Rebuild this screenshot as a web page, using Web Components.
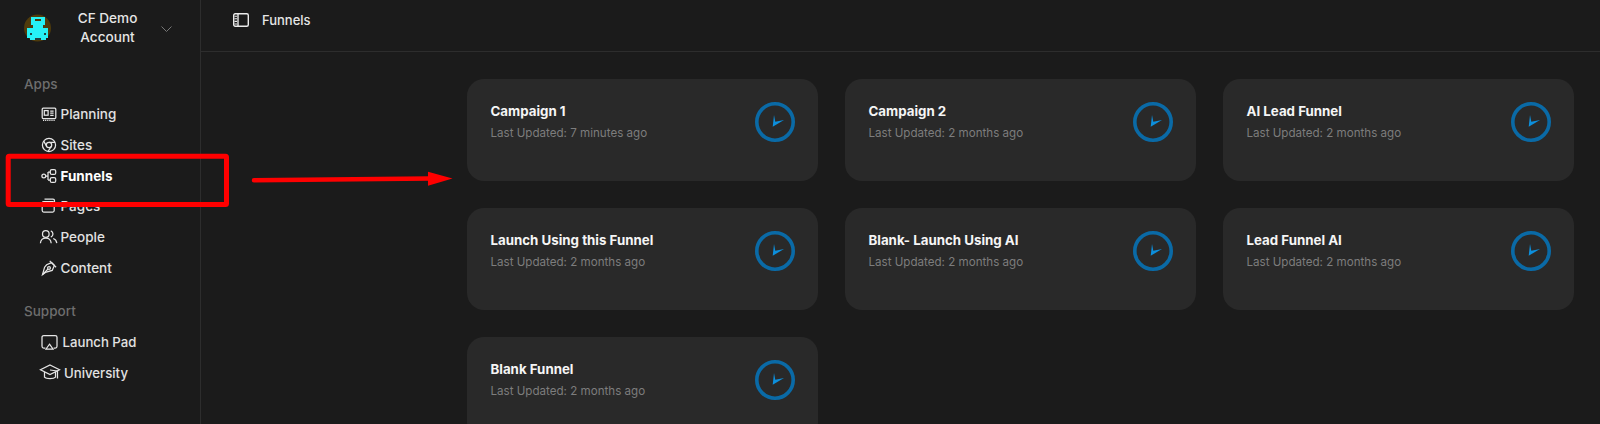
<!DOCTYPE html>
<html><head><meta charset="utf-8"><style>
html,body{margin:0;height:424px;overflow:hidden;background:#1b1b1b;font-family:Inter,"Liberation Sans",sans-serif}
</style></head><body>
<app-shell>
<side-bar slot="side">
  <account-head></account-head>
  <nav-group label="Apps">
    <nav-item icon="planning">Planning</nav-item>
    <nav-item icon="sites">Sites</nav-item>
    <nav-item icon="funnels" active>Funnels</nav-item>
    <nav-item icon="pages">Pages</nav-item>
    <nav-item icon="people">People</nav-item>
    <nav-item icon="content">Content</nav-item>
  </nav-group>
  <nav-group label="Support" class="support">
    <nav-item icon="launch" w="17" gap="5">Launch Pad</nav-item>
    <nav-item icon="uni" w="22" gap="3">University</nav-item>
  </nav-group>
</side-bar>
<top-bar slot="top">Funnels</top-bar>
<funnel-card name="Campaign 1" time="7 minutes ago"></funnel-card>
<funnel-card name="Campaign 2" time="2 months ago"></funnel-card>
<funnel-card name="AI Lead Funnel" time="2 months ago"></funnel-card>
<funnel-card name="Launch Using this Funnel" time="2 months ago"></funnel-card>
<funnel-card name="Blank- Launch Using AI" time="2 months ago"></funnel-card>
<funnel-card name="Lead Funnel AI" time="2 months ago"></funnel-card>
<funnel-card name="Blank Funnel" time="2 months ago"></funnel-card>
<red-annotation slot="over"></red-annotation>
</app-shell>
<script>
const ICONS={
planning:'<rect x="1.2" y="2.2" width="13.6" height="10.3" rx="1"/><rect x="3.3" y="4.6" width="3.8" height="4.6"/><path d="M9.2 5h3.4M9.2 7.200h3.4M9.2 9.400h3.4"/><path d="M2 14.300h12" stroke-dasharray="1.200 .9"/>',
sites:'<circle cx="8" cy="8" r="6.600"/><circle cx="8" cy="8" r="2.700"/><path d="M8 5.300h6.100M5.700 9.400 2.700 4.100M10.300 9.400 7 14.500"/>',
funnels:'<circle cx="2.800" cy="8" r="1.900"/><rect x="9.300" y="1.600" width="5.400" height="4.800" rx="1.500"/><rect x="9.300" y="9.600" width="5.400" height="4.800" rx="1.500"/><path d="M4.700 8H7M7 4h2.300M7 12h2.300M7 4v8"/>',
pages:'<rect x="1.200" y="3.500" width="12" height="10.500" rx="1.500"/><path d="M3.500 1.200h8.500a1.500 1.500 0 0 1 1.500 1.500V4"/>',
people:'<circle cx="4.800" cy="5" r="3.300"/><path d="M-.6 14.200c.3-3.200 2.400-5 5.400-5s5.100 1.800 5.400 5"/><path d="M9.800 1.900a3.300 3.300 0 0 1 0 6.200M12.200 9.500c2 .6 3.300 2.300 3.600 4.700"/>',
content:'<path d="M5.600 4.800 10.600 2.600 13.400 5.400 11.200 10.400 4.400 12.400 1.500 14.600 3.600 7.200Z"/><path d="M8.700 .9 15.100 7.300"/><circle cx="8" cy="8" r="1.400"/><path d="M1.500 14.600 7 9"/>',
launch:'<path d="M4.400 14H2.800A1.800 1.800 0 0 1 1 12.200V3.300A1.800 1.800 0 0 1 2.800 1.500h11.400A1.800 1.800 0 0 1 16 3.300v8.900a1.800 1.800 0 0 1-1.800 1.800h-1.600"/><path d="M8.500 10.200 12 15H5Z"/>',
uni:'<path d="M11 2 20.500 6.800 11 11.500 1.500 6.800Z"/><path d="M5.500 9v5.200c1.800 2 9.200 2 11 0V9M18.500 8v7.500M11 7l7.500 1"/>'
};
function def(name,html){customElements.define(name,class extends HTMLElement{
  constructor(){super();this.attachShadow({mode:'open'}).innerHTML=typeof html==='function'?html(this):html}
})}
def('app-shell',`<style>
:host{display:grid;grid-template-columns:200px 1fr;grid-template-rows:52px 1fr;width:1600px;height:424px;position:relative;overflow:hidden;background:#1b1b1b}
.s{grid-row:1/3;display:block}
.m{display:grid;grid-template-columns:repeat(3,351px);column-gap:27px;row-gap:27px;grid-auto-rows:102px;padding:27px 0 0 267px}
</style><div class="s"><slot name="side"></slot></div><div><slot name="top"></slot></div><div class="m"><slot></slot></div><slot name="over"></slot>`);
def('side-bar',`<style>:host{display:block;height:424px;box-sizing:border-box;border-right:1px solid #2d2d2d;width:201px}</style><slot></slot>`);
def('account-head',`<style>
:host{display:flex;align-items:flex-start;height:75px;box-sizing:border-box;padding:14px 0 0 24px;color:#e6e6e6;font-size:13.600px;font-weight:500;line-height:19.600px}
.a{width:28px;height:28px;flex:none}
.n{width:101px;text-align:center;margin:-5.500px 0 0 5px;height:40px}
.c{margin:12px 0 0 3px;width:11px;height:6px;flex:none}
</style><svg class="a" viewBox="0 0 28 28" shape-rendering="crispEdges"><circle cx="13.500" cy="14" r="13.500" fill="#4f3b0c" shape-rendering="auto"/><path fill="#26f2f6" d="M7 3h14v8h-2v3h5v10h-2v2h-6v-2h-4v2H6v-2H3V14h6v-3H7Z"/><path fill="#4f3b0c" d="M11 5h6v2h-6Z"/><path fill="#23413f" d="M6 19h2v2H6ZM20 19h2v2h-2ZM11 24h6v2h-6Z"/></svg><div class="n">CF Demo Account</div><svg class="c" viewBox="0 0 11 6" fill="none" stroke="#777" stroke-width="1"><path d="M.5.500 5.500 5.500 10.500.500"/></svg>`);
def('nav-group',h=>`<style>
:host{display:block;color:#e6e6e6}
.l{font-size:13.500px;font-weight:500;color:#6e6e6e;padding-left:24px;line-height:18px;margin-bottom:6px}
.i{display:flex;flex-direction:column}
:host(.support){margin-top:19px}
:host(.support) .l{margin-bottom:6.500px}
</style><div class="l">${h.getAttribute('label')}</div><div class="i"><slot></slot></div>`);
def('nav-item',h=>{const w=h.getAttribute('w')||16,g=h.getAttribute('gap');return `<style>
:host{display:flex;align-items:center;height:${g?'31.300':'30.650'}px;padding-left:${w==22?39:40.5}px;font-size:${g?13.200:13.500}px;font-weight:500;color:#e2e2e2;gap:${g||4}px}
:host([active]){font-weight:700;color:#fff}
svg{flex:none;overflow:visible;fill:none;stroke:#e6e6e6;stroke-width:1.250;width:${w}px;height:${w==22?20:16}px}
</style><svg viewBox="0 0 ${w} ${w==22?20:16}">${ICONS[h.getAttribute('icon')]}</svg><slot></slot>`});
def('top-bar',`<style>
:host{display:flex;align-items:center;height:52px;box-sizing:border-box;border-bottom:1px solid #2d2d2d;padding:0 0 11px 33px;gap:13px;color:#e6e6e6;font-size:13px;font-weight:500}
svg{width:16px;height:14px;fill:none;stroke:#ececec;stroke-width:1.400;flex:none}
</style><svg viewBox="0 0 16 14"><rect x=".7" y=".7" width="14.600" height="12.600" rx="1.500"/><path d="M5 .7v12.600"/><path d="M1.500 3.200h2.500M1.500 5.800h2.500M1.500 8.400h2.500M1.500 11h2.500" stroke-width="1.100"/></svg><slot></slot>`);
def('funnel-card',h=>`<style>
:host{display:flex;justify-content:space-between;box-sizing:border-box;width:351px;height:102px;background:#292929;border-radius:17px;padding:22px 23px 0 23.500px}
.t{font-size:13.300px;font-weight:700;color:#f5f5f5;line-height:20px}
.u{font-size:11.600px;font-weight:400;color:#7d7d7d;line-height:15px;margin-top:5px}
svg{width:40px;height:40px;flex:none;margin-top:1px}
</style><div><div class="t">${h.getAttribute('name')}</div><div class="u">Last Updated: ${h.getAttribute('time')}</div></div>
<svg viewBox="0 0 40 40"><circle cx="20" cy="20" r="18.200" fill="none" stroke="#0a6aa6" stroke-width="3.600"/><path d="M19 13 20.300 19.800 29 18 17.700 24.700Z" fill="#0d8fdc"/></svg>`);
def('red-annotation',`<style>:host{position:absolute;inset:0;pointer-events:none}svg{position:absolute;left:0;top:0}</style>
<svg width="1600" height="424" viewBox="0 0 1600 424"><rect x="8.200" y="156.200" width="218.300" height="48.300" rx="1" fill="none" stroke="#f00" stroke-width="5"/><path d="M254 180.300 430 178.500" stroke="#f00" stroke-width="4.500" stroke-linecap="round"/><path d="M428 171.700 452.500 178.400 428 185.700Z" fill="#f00"/></svg>`);
</script></body></html>
